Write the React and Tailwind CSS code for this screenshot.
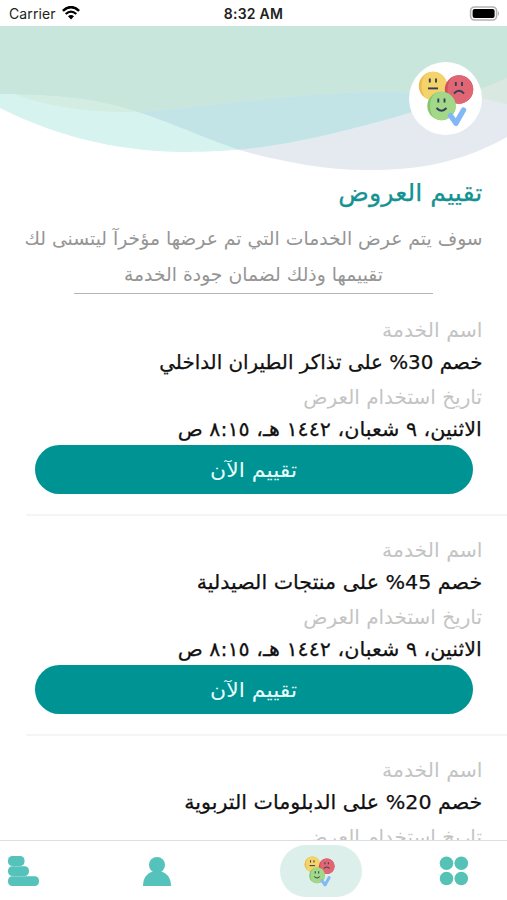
import React from "react";

const LAVENDER = "M0 0H507V111C450 143 400 144 366 144C325 144 285 136 250 127C205 114 155 88 110 78C75 70 40 68 0 68Z";
const AQUA = "M0 0H507V52C455 75 385 95 330 108C275 121 235 126 185 126C110 126 45 105 0 82Z";
const GREEN = "M0 0H507V78C470 69 440 66 370 66C280 67 190 85 125 86C85 86 45 80 15 68H0Z";

function Waves() {
  return (
    <svg className="absolute inset-0 h-full w-full" viewBox="0 0 507 148" preserveAspectRatio="none">
      <defs>
        <clipPath id="lav"><path d={LAVENDER} /></clipPath>
        <clipPath id="aqua"><path d={AQUA} /></clipPath>
      </defs>
      <path d={LAVENDER} fill="#e5eaf1" />
      <path d={AQUA} fill="#d6f3ef" />
      <g clipPath="url(#aqua)">
        <path d={GREEN} fill="#d3ede2" />
        <path d={LAVENDER} fill="#c2e4e6" />
      </g>
      <g clipPath="url(#lav)">
        <path d={GREEN} fill="#dae8e2" />
        <g clipPath="url(#aqua)"><path d={GREEN} fill="#c8e6dc" /></g>
      </g>
    </svg>
  );
}

function Face({ x, y, color, shade, mouth }) {
  return (
    <g transform={`translate(${x} ${y})`}>
      <circle r="14.2" fill={shade} />
      <path d="M-7-12.3A14.2 14.2 0 1 1-7 12.3C-13 6-13-6-7-12.3Z" fill={color} />
      <path d="M-3.2-7.4v4M3-7.4v4" stroke="#34405a" strokeWidth="1.9" />
      <path d={mouth} stroke="#34405a" strokeWidth="1.9" fill="none" />
    </g>
  );
}

function Faces({ className }) {
  return (
    <svg className={className} viewBox="0 0 56 56">
      <Face x={15} y={15} color="#f4d36b" shade="#eabc50" mouth="M-5 2.4H5" />
      <Face x={41} y={18.5} color="#df6672" shade="#cf505f" mouth="M-5 4Q0-1.5 5 4" />
      <Face x={23.5} y={35} color="#a2d887" shade="#84c66c" mouth="M-5 2Q0 7.5 5 2" />
      <path d="M32.5 44.5L38 52.2L45.5 39" fill="none" stroke="#83b7f5" strokeWidth="5.4" strokeLinecap="round" strokeLinejoin="round" />
    </svg>
  );
}

function StatusBar() {
  return (
    <header className="grid h-[26px] shrink-0 grid-cols-3 items-center bg-white px-[9px] font-['Inter','Liberation_Sans',sans-serif] text-[#222]">
      <div className="flex items-center gap-[6px]">
        <span className="text-[14px] tracking-[0.1px]">Carrier</span>
        <svg className="h-[14px] w-[18px]" viewBox="0 0 18 14" fill="none" stroke="#000">
          <path d="M.9 4.8Q9-2.6 17.1 4.8" strokeWidth="2.5" />
          <path d="M3.7 8Q9 3.3 14.3 8" strokeWidth="2.3" />
          <path d="M6 10.3Q9 7.8 12 10.3L9 13.4Z" fill="#000" stroke="none" />
        </svg>
      </div>
      <span className="text-center text-[14px] font-semibold tracking-[0.25px]">8:32 AM</span>
      <svg className="mr-[-2px] h-[15px] w-[31px] justify-self-end" viewBox="0 0 31 15">
        <rect x="1.6" y="1" width="26" height="13" rx="4" fill="#fff" stroke="#b2b2b2" strokeWidth="1.6" />
        <rect x="3.6" y="3" width="22" height="9" rx="2" fill="#000" />
        <path d="M29 5Q31 7.5 29 10Z" fill="#aaa" />
      </svg>
    </header>
  );
}

function Offer({ title, titleScale }) {
  return (
    <article className="flex h-[220px] shrink-0 flex-col">
      <div className="flex flex-col items-start pr-[25px] text-[20px] leading-[32px]">
        <p className="h-[32px] origin-right scale-x-[1.02] text-[#c4c4c4]">اسم الخدمة</p>
        <h2 className={`h-[32px] origin-right text-[#111] [-webkit-text-stroke:0.25px_#111] ${titleScale}`}>{title}</h2>
        <p className="mt-[3px] h-[32px] text-[#c4c4c4]">تاريخ استخدام العرض</p>
        <p className="h-[32px] origin-right scale-x-[1.035] text-[#111] [-webkit-text-stroke:0.25px_#111]">الاثنين، ٩ شعبان، ١٤٤٢ هـ، ٨:١٥ ص</p>
      </div>
      <button className="mr-[34px] flex h-[49px] w-[438px] items-center justify-center rounded-full bg-[#009393] pt-px text-[20px] text-[#e6ffff]">
        <span className="scale-x-[1.1]">تقييم الآن</span>
      </button>
      <div className="mr-0 mt-[20px] h-[2px] w-[481px] bg-[#f5f5f5]" />
    </article>
  );
}

export default function App() {
  return (
    <div dir="ltr" className="flex h-[900px] w-[507px] flex-col overflow-hidden bg-white">
      <StatusBar />
      <main dir="rtl" className="flex min-h-0 flex-1 flex-col overflow-hidden whitespace-nowrap font-['DejaVu_Sans',sans-serif]">
        <div className="relative flex h-[148px] shrink-0 items-start pr-[25px] pt-[36px]">
          <Waves />
          <div className="relative flex h-[73px] w-[73px] items-center justify-center rounded-full bg-white">
            <Faces className="h-[56px] w-[56px]" />
          </div>
        </div>
        <div className="flex h-[38px] shrink-0 pr-[25px]">
          <h1 className="origin-right scale-x-[1.056] text-[24px] leading-[38px] text-[#149292] [-webkit-text-stroke:0.25px_#149292]">تقييم العروض</h1>
        </div>
        <div className="flex h-[82px] shrink-0 flex-col items-center pt-[9px] text-[18.8px] leading-[36px] text-[#959595]">
          <p>سوف يتم عرض الخدمات التي تم عرضها مؤخرآ ليتسنى لك</p>
          <p>تقييمها وذلك لضمان جودة الخدمة</p>
        </div>
        <div className="mx-[74px] mt-[-1px] h-px shrink-0 bg-[#b5b5b5]" />
        <section className="flex flex-col pt-[20px]">
          <Offer title="خصم 30% على تذاكر الطيران الداخلي" titleScale="scale-x-[0.993]" />
          <Offer title="خصم 45% على منتجات الصيدلية" titleScale="scale-x-[1.03]" />
          <Offer title="خصم 20% على الدبلومات التربوية" titleScale="scale-x-[1.03]" />
        </section>
      </main>
      <nav className="flex h-[60px] shrink-0 items-start border-t border-[#dedede] bg-white pl-[8px] pt-[4px]">
        <svg className="mt-[11px] h-[31px] w-[31px]" viewBox="0 0 31 31" fill="#55c2bb">
          <rect x="0" y="0" width="16.5" height="10" rx="4.3" />
          <rect x="0" y="10.2" width="21" height="9.7" rx="4.3" />
          <rect x="0" y="20.3" width="31" height="9.7" rx="4.3" />
        </svg>
        <svg className="ml-[104px] mt-[12px] h-[29px] w-[28px]" viewBox="0 0 28 29" fill="#55c2bb">
          <circle cx="14" cy="8" r="8" />
          <path d="M0 29C0 21 4 16 10 14.5H18C24 16 28 21 28 29Z" />
        </svg>
        <div className="ml-[109px] flex h-[52px] w-[82px] items-center justify-center rounded-full bg-[#ddefeb]">
          <Faces className="mr-[3px] h-[31px] w-[31px]" />
        </div>
        <svg className="ml-[77px] mt-[11px] h-[30px] w-[30px]" viewBox="0 0 30 30" fill="#55c2b5">
          <circle cx="7.5" cy="7.3" r="6.8" /><circle cx="22.3" cy="7.3" r="6.8" />
          <circle cx="7.5" cy="22.5" r="6.8" /><circle cx="22.3" cy="22.5" r="6.8" />
        </svg>
      </nav>
    </div>
  );
}
